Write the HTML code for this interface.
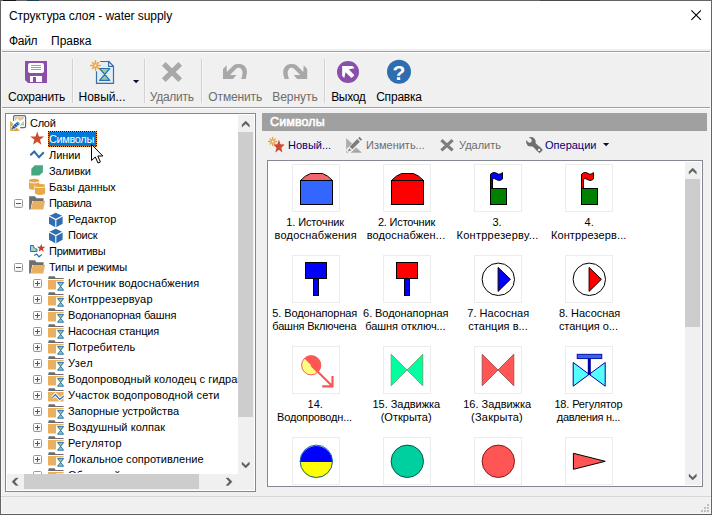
<!DOCTYPE html>
<html lang="ru"><head><meta charset="utf-8"><title>Структура слоя - water supply</title>
<style>
*{box-sizing:border-box}
html,body{margin:0;padding:0}
body{width:712px;height:515px;overflow:hidden;background:#f0f0f0;position:relative;font-family:"Liberation Sans",sans-serif;font-size:11px;color:#000}
.a{position:absolute}
.t{position:absolute;white-space:nowrap;line-height:16px}
.seg{font-size:12px}
.tb{position:absolute;font-size:12px;white-space:nowrap;top:89px;line-height:16px;text-align:center}
.dis{color:#6d6d6d}
.sep{position:absolute;top:59px;height:44px;width:2px;background:linear-gradient(90deg,#d2d2d2 50%,#f7f7f9 50%)}
.tr{position:absolute;white-space:nowrap;line-height:16px;height:16px;font-size:11px}
.exp{position:absolute;width:9px;height:9px;border:1px solid #989898;background:linear-gradient(#fff 50%,#ececec);border-radius:1.5px}
.exp i{position:absolute;left:1px;top:3px;width:5px;height:1px;background:#44558f}
.exp b{position:absolute;left:3px;top:1px;width:1px;height:5px;background:#44558f}
.ib{position:absolute;width:48px;height:48px;border:1px solid #ececec;background:#fff}
.lb{position:absolute;font-size:11px;line-height:16px;white-space:nowrap}
svg{position:absolute;overflow:visible}
</style></head>
<body>
<div class="a" style="left:0;top:0;width:712px;height:515px;border:1px solid #646464;border-bottom-color:#5c5c5c"></div>
<div class="a" style="left:1px;top:1px;width:710px;height:513px;border:1px solid #f8f8f8;border-top:0"></div>
<div class="a" style="left:3px;top:0;width:13px;height:1px;background:#151515"></div><div class="a" style="left:27px;top:0;width:12px;height:1px;background:#1c3f4e"></div><div class="a" style="left:540px;top:0;width:60px;height:1px;background:#4a4a4a"></div>
<div class="a" style="left:1px;top:1px;width:710px;height:48px;background:#fff"></div>
<div class="t seg" style="left:9px;top:8px;letter-spacing:-0.05px">Структура слоя - water supply</div>
<svg class="a" style="left:691px;top:10px" width="11" height="11" viewBox="0 0 11 11" ><path d="M0.4,0.4L9.9,9.9M9.9,0.4L0.4,9.9" stroke="#000" stroke-width="1.1" fill="none"/></svg>
<div class="t seg" style="left:9px;top:33px;letter-spacing:-0.3px">Файл</div>
<div class="t seg" style="left:51px;top:33px">Правка</div>
<div class="a" style="left:2px;top:51px;width:708px;height:1px;background:#a0a0a0"></div>
<div class="a" style="left:1px;top:52px;width:710px;height:1px;background:#fff"></div>
<div class="a" style="left:2px;top:107px;width:708px;height:1px;background:#a0a0a0"></div>
<div class="a" style="left:1px;top:108px;width:710px;height:1px;background:#fff"></div>
<div class="sep" style="left:72px"></div>
<div class="sep" style="left:144px"></div>
<div class="sep" style="left:201px"></div>
<div class="sep" style="left:324px"></div>
<div class="tb" style="left:-3.5px;width:80px;letter-spacing:-0.3px">Сохранить</div>
<div class="tb" style="left:62px;width:80px;letter-spacing:0px">Новый...</div>
<div class="tb dis" style="left:131.8px;width:80px;letter-spacing:-0.25px">Удалить</div>
<div class="tb dis" style="left:195.2px;width:80px;letter-spacing:-0.15px">Отменить</div>
<div class="tb dis" style="left:255px;width:80px;letter-spacing:0px">Вернуть</div>
<div class="tb" style="left:308.3px;width:80px;letter-spacing:-0.35px">Выход</div>
<div class="tb" style="left:359px;width:80px;letter-spacing:-0.2px">Справка</div>
<svg class="a" style="left:24px;top:60px" width="24" height="24" viewBox="0 0 24 24" ><path d="M1,1H23V23H4L1,20Z" fill="#8b4fab"/><rect x="4" y="3" width="16" height="10" rx="2" fill="#fff"/><rect x="7" y="5" width="10" height="1" fill="#a0a0a0"/><rect x="7" y="7" width="10" height="1" fill="#a0a0a0"/><rect x="7" y="9" width="10" height="1" fill="#a0a0a0"/><rect x="6" y="16" width="12" height="6" fill="#fff"/><rect x="9" y="17" width="3" height="5" fill="#8b4fab"/></svg>
<svg class="a" style="left:90px;top:59px" width="26" height="26" viewBox="0 0 26 26" ><path d="M7,2.5H18.6L23.5,7.4V24.4H6.5V2.5Z" fill="#e3edf8" stroke="#3a6ea5" stroke-width="1.2" stroke-linejoin="round"/><path d="M18.6,2.5V7.4H23.5Z" fill="#fff" stroke="#3a6ea5" stroke-width="1.2" stroke-linejoin="round"/><circle cx="5.5" cy="6.5" r="6" fill="#f0f0f0"/><path d="M9.6,9.5H19.8L9.6,21.4H19.8Z" fill="#8fd0a5" stroke="#2f6eb0" stroke-width="1.2" stroke-linejoin="round"/><line x1="0.70" y1="6.50" x2="10.30" y2="6.50" stroke="#e8a33d" stroke-width="1.5" stroke-linecap="round"/><line x1="2.51" y1="3.51" x2="8.49" y2="9.49" stroke="#e8a33d" stroke-width="1.5" stroke-linecap="round"/><line x1="5.50" y1="1.70" x2="5.50" y2="11.30" stroke="#e8a33d" stroke-width="1.5" stroke-linecap="round"/><line x1="8.49" y1="3.51" x2="2.51" y2="9.49" stroke="#e8a33d" stroke-width="1.5" stroke-linecap="round"/><circle cx="5.5" cy="6.5" r="1" fill="#fff"/></svg>
<svg class="a" style="left:132.9px;top:79.9px" width="7" height="4" viewBox="0 0 7 4" ><polygon points="0,0 6.2,0 3.1,3.2" fill="#0a1030"/></svg>
<svg class="a" style="left:160px;top:62px" width="24" height="20" viewBox="0 0 24 20" ><path d="M3.8,1.8L20.2,18.2M20.2,1.8L3.8,18.2" stroke="#a8a8a8" stroke-width="5.2" fill="none" transform="translate(0,0)"/></svg>
<svg class="a" style="left:223px;top:64px" width="25" height="16" viewBox="0 0 25 16" ><path d="M0,14.9V4.95L3.55,1.35L3.85,8.05L10.65,1.35C13,-0.4 18.5,-0.8 21.5,2 C24.5,5 24.6,9 22.65,14.9H18.15C19.8,10.5 20.2,7.5 18.4,5.2C16.8,3.4 14.3,3.6 13.15,4.75L6.95,10.95H13.45L10.05,14.9Z" fill="#a8a8a8"/></svg>
<svg class="a" style="left:283px;top:64px" width="25" height="16" viewBox="0 0 25 16" ><path d="M0,14.9V4.95L3.55,1.35L3.85,8.05L10.65,1.35C13,-0.4 18.5,-0.8 21.5,2 C24.5,5 24.6,9 22.65,14.9H18.15C19.8,10.5 20.2,7.5 18.4,5.2C16.8,3.4 14.3,3.6 13.15,4.75L6.95,10.95H13.45L10.05,14.9Z" fill="#a8a8a8" transform="translate(24.2,0) scale(-1,1)"/></svg>
<svg class="a" style="left:337px;top:60px" width="24" height="24" viewBox="0 0 24 24" ><circle cx="11" cy="12" r="11" fill="#8b4fab"/><polygon points="5.16,5.94 15.50,5.94 17.60,8.30 11.80,9.35 17.40,15.25 14.50,18.05 8.50,12.15 7.30,18.05 5.16,15.90" fill="#fff"/></svg>
<svg class="a" style="left:387px;top:60px" width="24" height="24" viewBox="0 0 24 24" ><circle cx="12" cy="11.8" r="12" fill="#2e6db0"/><text x="12" y="19.6" text-anchor="middle" font-family="Liberation Sans, sans-serif" font-weight="bold" font-size="21" fill="#fff">?</text></svg>
<div class="a" style="left:5px;top:113px;width:251px;height:379px;border:1px solid #828790;background:#fff"></div>
<div class="a" style="left:7px;top:115px;width:231px;height:359px;overflow:hidden">
<svg class="a" style="left:2px;top:0px" width="18" height="17" viewBox="0 0 18 17" ><rect x="4.6" y="0.6" width="12" height="12" rx="1.4" fill="#fff" stroke="#6a6a6a" stroke-width="1.2"/><polygon points="6,2.1 15,2.1 15,2.9 11.3,6 8.5,3.6 6,5.8" fill="#f0c88a"/><rect x="3.6" y="5.9" width="7.6" height="8" fill="#fff"/><polygon points="15,6.2 15,10.6 10.3,10.6" fill="#9ad6b4"/><polygon points="1.1,5.8 1.1,15.9 10.9,15.9" fill="#e8a840"/><path d="M3.4,13.4L10.4,7.2" stroke="#fff" stroke-width="4.6"/><path d="M4.6,12.3L9.8,7.8" stroke="#1458b0" stroke-width="3.2"/><path d="M2.9,13.9L6.1,13.2L3.7,10.7Z" fill="#1458b0"/><path d="M4.6,10.2L6.9,12.8M6.6,8.5L8.9,11.1M8.1,7.2L10.4,9.8" stroke="#fff" stroke-width="0.6"/><path d="M9.6,4.4L11.4,6.2" stroke="#7aa0d0" stroke-width="0.6" stroke-dasharray="0.7 0.7"/><path d="M13.2,4.6L15.6,2.4" stroke="#7aa0d0" stroke-width="0.6" stroke-dasharray="0.7 0.7"/><path d="M5.8,14.9h0.8M7.4,14.9h0.8" stroke="#b88430" stroke-width="0.8"/></svg>
<div class="tr" style="left:23px;top:0px;letter-spacing:-0.317px">Слой</div>
<svg class="a" style="left:23px;top:16px" width="16" height="16" viewBox="0 0 16 16" ><polygon points="7.20,0.50 8.90,5.45 14.14,5.54 9.96,8.70 11.49,13.71 7.20,10.70 2.91,13.71 4.44,8.70 0.26,5.54 5.50,5.45" fill="#d04a2f"/></svg>
<div class="a" style="left:41px;top:16px;width:49px;height:16px;background:repeating-conic-gradient(#ff8c28 0 25%,#111 0 50%) 0 0/2px 2px"></div><div class="a" style="left:42px;top:17px;width:47px;height:14px;background:#0078d7"></div>
<div class="tr" style="left:42px;top:16px;color:#fff;letter-spacing:-0.38px">Символы</div>
<svg class="a" style="left:23px;top:32px" width="16" height="16" viewBox="0 0 16 16" ><path d="M0.3,8.3L4.3,4.5L9,10.3L13.8,5.3" stroke="#2e6da8" stroke-width="2" fill="none"/></svg>
<div class="tr" style="left:42px;top:32px;letter-spacing:-0.084px">Линии</div>
<svg class="a" style="left:23px;top:48px" width="16" height="16" viewBox="0 0 16 16" ><polygon points="1.3,5.8 4.8,2.3 12.9,2.3 12.9,9.2 9.3,12.6 1.3,12.6" fill="#45a97f"/></svg>
<div class="tr" style="left:42px;top:48px;letter-spacing:-0.023px">Заливки</div>
<svg class="a" style="left:23px;top:64px" width="17" height="17" viewBox="0 0 17 17" ><path d="M-1.0,1.8V8.899999999999999A5.1,1.8 0 0 0 9.2,8.899999999999999V1.8Z" fill="#e8a845" stroke="#fff" stroke-width="1" paint-order="stroke"/><ellipse cx="4.1" cy="2.4" rx="5.1" ry="1.8" fill="#fff"/><ellipse cx="4.1" cy="1.6" rx="5.1" ry="1.8" fill="#e8a845"/><path d="M4.9,6.7V14.1A5.1,1.8 0 0 0 15.1,14.1V6.7Z" fill="#e8a845" stroke="#fff" stroke-width="1" paint-order="stroke"/><ellipse cx="10" cy="7.3" rx="5.1" ry="1.8" fill="#fff"/><ellipse cx="10" cy="6.5" rx="5.1" ry="1.8" fill="#e8a845"/></svg>
<div class="tr" style="left:42px;top:64px;letter-spacing:-0.051px">Базы данных</div>
<div class="exp" style="left:7px;top:84px"><i></i></div>
<svg class="a" style="left:22px;top:80px" width="17" height="16" viewBox="0 0 17 16" ><path d="M0.1,14.6V1.2H5.8L7.6,3.3H14.6V6H3.2L1.6,14.6Z" fill="#6e6e6e"/><polygon points="3.9,6.1 16.1,6.1 14.3,14.6 1.8,14.6" fill="#e8b060"/></svg>
<div class="tr" style="left:42px;top:80px;letter-spacing:-0.329px">Правила</div>
<svg class="a" style="left:41px;top:96.5px" width="16" height="16" viewBox="0 0 16 16" ><polygon points="7.8,0.8 14.6,4 14.6,11.8 7.8,15.6 1,11.8 1,4" fill="#2e6db0"/><path d="M1,4L7.8,7.6L14.6,4M7.8,7.6V15.6" stroke="#fff" stroke-width="1.1" fill="none"/></svg>
<div class="tr" style="left:61px;top:96px;letter-spacing:0.163px">Редактор</div>
<svg class="a" style="left:41px;top:112.5px" width="16" height="16" viewBox="0 0 16 16" ><polygon points="7.8,0.8 14.6,4 14.6,11.8 7.8,15.6 1,11.8 1,4" fill="#2e6db0"/><path d="M1,4L7.8,7.6L14.6,4M7.8,7.6V15.6" stroke="#fff" stroke-width="1.1" fill="none"/></svg>
<div class="tr" style="left:61px;top:112px;letter-spacing:-0.221px">Поиск</div>
<svg class="a" style="left:23px;top:129.3px" width="16" height="16" viewBox="0 0 16 16" ><path d="M0.5,1.5H3.5C3.8,4 5,5 7,5V7.5H0.5Z" fill="#a0d8b8" stroke="#2e6db0" stroke-width="1"/><polygon points="11.20,-0.20 12.26,2.74 15.38,2.84 12.91,4.76 13.79,7.76 11.20,6.00 8.61,7.76 9.49,4.76 7.02,2.84 10.14,2.74" fill="#d03a2a"/><path d="M4.2,11.6L6.6,10L9,12.8L12,10.4" stroke="#2e6db0" stroke-width="1.2" fill="none"/></svg>
<div class="tr" style="left:42px;top:128px;letter-spacing:-0.277px">Примитивы</div>
<div class="exp" style="left:7px;top:148px"><i></i></div>
<svg class="a" style="left:22px;top:144px" width="17" height="16" viewBox="0 0 17 16" ><path d="M0.1,14.6V1.2H5.8L7.6,3.3H14.6V6H3.2L1.6,14.6Z" fill="#6e6e6e"/><polygon points="3.9,6.1 16.1,6.1 14.3,14.6 1.8,14.6" fill="#e8b060"/></svg>
<div class="tr" style="left:42px;top:144px;letter-spacing:-0.124px">Типы и режимы</div>
<div class="exp" style="left:26px;top:164px"><i></i><b></b></div>
<svg class="a" style="left:41px;top:160px" width="17" height="16" viewBox="0 0 17 16" ><path d="M0,4L0.8,1.2H6.6L7.6,2.9H15.6V4H0Z" fill="#6e6e6e"/><path d="M0,5H15.6V14.6H1.2Q0,14.6 0,13.4Z" fill="#e8b060"/><rect x="8" y="6.4" width="8.4" height="9.6" fill="#fff"/><path d="M9.6,7.6H15.6L9.6,15.2H15.6Z" fill="#8fd0a5" stroke="#2f6eb0" stroke-width="1.0" stroke-linejoin="round"/></svg>
<div class="tr" style="left:61px;top:160px;letter-spacing:0.073px">Источник водоснабжения</div>
<div class="exp" style="left:26px;top:180px"><i></i><b></b></div>
<svg class="a" style="left:41px;top:176px" width="17" height="16" viewBox="0 0 17 16" ><path d="M0,4L0.8,1.2H6.6L7.6,2.9H15.6V4H0Z" fill="#6e6e6e"/><path d="M0,5H15.6V14.6H1.2Q0,14.6 0,13.4Z" fill="#e8b060"/><rect x="8" y="6.4" width="8.4" height="9.6" fill="#fff"/><path d="M9.6,7.6H15.6L9.6,15.2H15.6Z" fill="#8fd0a5" stroke="#2f6eb0" stroke-width="1.0" stroke-linejoin="round"/></svg>
<div class="tr" style="left:61px;top:176px;letter-spacing:0.183px">Контррезервуар</div>
<div class="exp" style="left:26px;top:196px"><i></i><b></b></div>
<svg class="a" style="left:41px;top:192px" width="17" height="16" viewBox="0 0 17 16" ><path d="M0,4L0.8,1.2H6.6L7.6,2.9H15.6V4H0Z" fill="#6e6e6e"/><path d="M0,5H15.6V14.6H1.2Q0,14.6 0,13.4Z" fill="#e8b060"/><rect x="8" y="6.4" width="8.4" height="9.6" fill="#fff"/><path d="M9.6,7.6H15.6L9.6,15.2H15.6Z" fill="#8fd0a5" stroke="#2f6eb0" stroke-width="1.0" stroke-linejoin="round"/></svg>
<div class="tr" style="left:61px;top:192px;letter-spacing:-0.11px">Водонапорная башня</div>
<div class="exp" style="left:26px;top:212px"><i></i><b></b></div>
<svg class="a" style="left:41px;top:208px" width="17" height="16" viewBox="0 0 17 16" ><path d="M0,4L0.8,1.2H6.6L7.6,2.9H15.6V4H0Z" fill="#6e6e6e"/><path d="M0,5H15.6V14.6H1.2Q0,14.6 0,13.4Z" fill="#e8b060"/><rect x="8" y="6.4" width="8.4" height="9.6" fill="#fff"/><path d="M9.6,7.6H15.6L9.6,15.2H15.6Z" fill="#8fd0a5" stroke="#2f6eb0" stroke-width="1.0" stroke-linejoin="round"/></svg>
<div class="tr" style="left:61px;top:208px;letter-spacing:-0.149px">Насосная станция</div>
<div class="exp" style="left:26px;top:228px"><i></i><b></b></div>
<svg class="a" style="left:41px;top:224px" width="17" height="16" viewBox="0 0 17 16" ><path d="M0,4L0.8,1.2H6.6L7.6,2.9H15.6V4H0Z" fill="#6e6e6e"/><path d="M0,5H15.6V14.6H1.2Q0,14.6 0,13.4Z" fill="#e8b060"/><rect x="8" y="6.4" width="8.4" height="9.6" fill="#fff"/><path d="M9.6,7.6H15.6L9.6,15.2H15.6Z" fill="#8fd0a5" stroke="#2f6eb0" stroke-width="1.0" stroke-linejoin="round"/></svg>
<div class="tr" style="left:61px;top:224px;letter-spacing:0.11px">Потребитель</div>
<div class="exp" style="left:26px;top:244px"><i></i><b></b></div>
<svg class="a" style="left:41px;top:240px" width="17" height="16" viewBox="0 0 17 16" ><path d="M0,4L0.8,1.2H6.6L7.6,2.9H15.6V4H0Z" fill="#6e6e6e"/><path d="M0,5H15.6V14.6H1.2Q0,14.6 0,13.4Z" fill="#e8b060"/><rect x="8" y="6.4" width="8.4" height="9.6" fill="#fff"/><path d="M9.6,7.6H15.6L9.6,15.2H15.6Z" fill="#8fd0a5" stroke="#2f6eb0" stroke-width="1.0" stroke-linejoin="round"/></svg>
<div class="tr" style="left:61px;top:240px;letter-spacing:0.377px">Узел</div>
<div class="exp" style="left:26px;top:260px"><i></i><b></b></div>
<svg class="a" style="left:41px;top:256px" width="17" height="16" viewBox="0 0 17 16" ><path d="M0,4L0.8,1.2H6.6L7.6,2.9H15.6V4H0Z" fill="#6e6e6e"/><path d="M0,5H15.6V14.6H1.2Q0,14.6 0,13.4Z" fill="#e8b060"/><rect x="8" y="6.4" width="8.4" height="9.6" fill="#fff"/><path d="M9.6,7.6H15.6L9.6,15.2H15.6Z" fill="#8fd0a5" stroke="#2f6eb0" stroke-width="1.0" stroke-linejoin="round"/></svg>
<div class="tr" style="left:61px;top:256px;letter-spacing:0.06px">Водопроводный колодец с гидрантом</div>
<div class="exp" style="left:26px;top:276px"><i></i><b></b></div>
<svg class="a" style="left:41px;top:272px" width="17" height="16" viewBox="0 0 17 16" ><path d="M0,4L0.8,1.2H6.6L7.6,2.9H15.6V4H0Z" fill="#6e6e6e"/><path d="M0,5H15.6V14.6H1.2Q0,14.6 0,13.4Z" fill="#e8b060"/><path d="M4.2,10.6L7.4,7.6L11.6,12.4L15.6,9.2" stroke="#fff" stroke-width="3.2" fill="none"/><path d="M4.2,10.6L7.4,7.6L11.6,12.4L15.6,9.2" stroke="#2e6db0" stroke-width="1.3" fill="none"/></svg>
<div class="tr" style="left:61px;top:272px;letter-spacing:0.164px">Участок водопроводной сети</div>
<div class="exp" style="left:26px;top:292px"><i></i><b></b></div>
<svg class="a" style="left:41px;top:288px" width="17" height="16" viewBox="0 0 17 16" ><path d="M0,4L0.8,1.2H6.6L7.6,2.9H15.6V4H0Z" fill="#6e6e6e"/><path d="M0,5H15.6V14.6H1.2Q0,14.6 0,13.4Z" fill="#e8b060"/><rect x="8" y="6.4" width="8.4" height="9.6" fill="#fff"/><path d="M9.6,7.6H15.6L9.6,15.2H15.6Z" fill="#8fd0a5" stroke="#2f6eb0" stroke-width="1.0" stroke-linejoin="round"/></svg>
<div class="tr" style="left:61px;top:288px;letter-spacing:0.012px">Запорные устройства</div>
<div class="exp" style="left:26px;top:308px"><i></i><b></b></div>
<svg class="a" style="left:41px;top:304px" width="17" height="16" viewBox="0 0 17 16" ><path d="M0,4L0.8,1.2H6.6L7.6,2.9H15.6V4H0Z" fill="#6e6e6e"/><path d="M0,5H15.6V14.6H1.2Q0,14.6 0,13.4Z" fill="#e8b060"/><rect x="8" y="6.4" width="8.4" height="9.6" fill="#fff"/><path d="M9.6,7.6H15.6L9.6,15.2H15.6Z" fill="#8fd0a5" stroke="#2f6eb0" stroke-width="1.0" stroke-linejoin="round"/></svg>
<div class="tr" style="left:61px;top:304px;letter-spacing:0.061px">Воздушный колпак</div>
<div class="exp" style="left:26px;top:324px"><i></i><b></b></div>
<svg class="a" style="left:41px;top:320px" width="17" height="16" viewBox="0 0 17 16" ><path d="M0,4L0.8,1.2H6.6L7.6,2.9H15.6V4H0Z" fill="#6e6e6e"/><path d="M0,5H15.6V14.6H1.2Q0,14.6 0,13.4Z" fill="#e8b060"/><rect x="8" y="6.4" width="8.4" height="9.6" fill="#fff"/><path d="M9.6,7.6H15.6L9.6,15.2H15.6Z" fill="#8fd0a5" stroke="#2f6eb0" stroke-width="1.0" stroke-linejoin="round"/></svg>
<div class="tr" style="left:61px;top:320px;letter-spacing:0.227px">Регулятор</div>
<div class="exp" style="left:26px;top:340px"><i></i><b></b></div>
<svg class="a" style="left:41px;top:336px" width="17" height="16" viewBox="0 0 17 16" ><path d="M0,4L0.8,1.2H6.6L7.6,2.9H15.6V4H0Z" fill="#6e6e6e"/><path d="M0,5H15.6V14.6H1.2Q0,14.6 0,13.4Z" fill="#e8b060"/><rect x="8" y="6.4" width="8.4" height="9.6" fill="#fff"/><path d="M9.6,7.6H15.6L9.6,15.2H15.6Z" fill="#8fd0a5" stroke="#2f6eb0" stroke-width="1.0" stroke-linejoin="round"/></svg>
<div class="tr" style="left:61px;top:336px;letter-spacing:0.006px">Локальное сопротивление</div>
<div class="exp" style="left:26px;top:356px"><i></i></div>
<svg class="a" style="left:41px;top:352px" width="17" height="16" viewBox="0 0 17 16" ><path d="M0,4L0.8,1.2H6.6L7.6,2.9H15.6V4H0Z" fill="#6e6e6e"/><path d="M0,5H15.6V14.6H1.2Q0,14.6 0,13.4Z" fill="#e8b060"/><rect x="8" y="6.4" width="8.4" height="9.6" fill="#fff"/><path d="M9.6,7.6H15.6L9.6,15.2H15.6Z" fill="#8fd0a5" stroke="#2f6eb0" stroke-width="1.0" stroke-linejoin="round"/></svg>
<div class="a" style="left:61px;top:352px;width:170px;height:6px;overflow:hidden"><div class="tr" style="left:0;top:0;letter-spacing:0.06px">Обратный клапан</div></div>
</div>
<div class="a" style="left:238px;top:115px;width:16px;height:359px;background:#f0f0f0"></div>
<div class="a" style="left:238px;top:132px;width:15px;height:285px;background:#cdcdcd"></div>
<svg class="a" style="left:241.8px;top:120.9px" width="8" height="8" viewBox="0 0 8 8" ><polygon points="3.70,0.00 7.40,3.70 7.40,6.10 3.70,2.70 0.00,6.10 0.00,3.70" fill="#5c5c5c" stroke="#5c5c5c" stroke-width="0.35"/></svg>
<svg class="a" style="left:241.8px;top:461.9px" width="8" height="8" viewBox="0 0 8 8" ><polygon points="3.70,6.10 7.40,2.40 7.40,0.00 3.70,3.40 0.00,0.00 0.00,2.40" fill="#5c5c5c" stroke="#5c5c5c" stroke-width="0.35"/></svg>
<div class="a" style="left:7px;top:474px;width:247px;height:16px;background:#f0f0f0"></div>
<div class="a" style="left:24px;top:474px;width:175px;height:15px;background:#cdcdcd"></div>
<svg class="a" style="left:11.9px;top:477.8px" width="8" height="8" viewBox="0 0 8 8" ><polygon points="0.00,3.70 3.70,7.40 6.10,7.40 2.70,3.70 6.10,0.00 3.70,0.00" fill="#5c5c5c" stroke="#5c5c5c" stroke-width="0.35"/></svg>
<svg class="a" style="left:226px;top:477.8px" width="8" height="8" viewBox="0 0 8 8" ><polygon points="6.10,3.70 2.40,7.40 0.00,7.40 3.40,3.70 0.00,0.00 2.40,0.00" fill="#5c5c5c" stroke="#5c5c5c" stroke-width="0.35"/></svg>
<svg class="a" style="left:91px;top:144px" width="13" height="21" viewBox="0 0 13 21" ><path d="M0.5,0.5V16.5L4.3,13L7,19L9.4,18L6.8,12H11.8Z" fill="#fff" stroke="#000" stroke-width="1" stroke-linejoin="miter"/></svg>
<div class="a" style="left:262px;top:113px;width:445px;height:18px;background:#a0a0a0"></div>
<div class="t" style="left:270px;top:114px;font-size:12.5px;color:#fff;-webkit-text-stroke:0.55px #fff;letter-spacing:0.1px">Символы</div>
<svg class="a" style="left:269px;top:137px" width="17" height="17" viewBox="0 0 17 17" ><line x1="-0.40" y1="4.50" x2="7.60" y2="4.50" stroke="#e8a33d" stroke-width="1.3" stroke-linecap="round"/><line x1="1.11" y1="2.01" x2="6.09" y2="6.99" stroke="#e8a33d" stroke-width="1.3" stroke-linecap="round"/><line x1="3.60" y1="0.50" x2="3.60" y2="8.50" stroke="#e8a33d" stroke-width="1.3" stroke-linecap="round"/><line x1="6.09" y1="2.01" x2="1.11" y2="6.99" stroke="#e8a33d" stroke-width="1.3" stroke-linecap="round"/><circle cx="3.6" cy="4.5" r="1" fill="#fff"/><polygon points="9.90,2.50 11.43,7.18 15.61,7.48 12.37,10.66 13.43,15.52 9.90,12.82 6.37,15.52 7.43,10.66 4.19,7.48 8.37,7.18" fill="#d04a2f" stroke="#f0f0f0" stroke-width="0.8" paint-order="stroke"/></svg>
<div class="t" style="left:288px;top:137px;color:#00007a">Новый...</div>
<svg class="a" style="left:345px;top:135px;overflow:hidden" width="19" height="19" viewBox="-1 -2 19 19"><polygon points="0.1,1.1 0.1,15.7 16,15.7" fill="#adadad"/><path d="M8.2,14.6h0.8M10.2,14.6h0.8M12.2,14.6h0.8" stroke="#8a8a8a" stroke-width="0.8"/><g transform="translate(0,0.7)"><path d="M3.6,12.2L14.4,1.4" stroke="#f4f4f4" stroke-width="5.4" stroke-linecap="square"/><path d="M1.2,14.6L6.4,13.2L2.6,9.4Z" fill="#f4f4f4"/><path d="M5,10.3L12.6,2.7" stroke="#7c7c7c" stroke-width="3.8"/><path d="M13.5,1.8L14.9,0.4" stroke="#7c7c7c" stroke-width="3.8"/><path d="M1.9,13.9L5.6,12.6L3.2,10.2Z" fill="#7c7c7c"/><path d="M3.4,10.6L5.2,12.4" stroke="#f0f0f0" stroke-width="0.7"/></g></svg>
<div class="t dis" style="left:366px;top:137px">Изменить...</div>
<svg class="a" style="left:440px;top:139px" width="14" height="13" viewBox="0 0 14 13" ><path d="M1.4,1.1L12.6,11.4M12.6,1.1L1.4,11.4" stroke="#7d7d7d" stroke-width="3.3" fill="none"/></svg>
<div class="t dis" style="left:459px;top:137px">Удалить</div>
<svg class="a" style="left:526px;top:137px;overflow:hidden" width="17" height="17" viewBox="0 0 17 17"><circle cx="4.9" cy="4.8" r="4.8" fill="#6f6f6f"/><path d="M5.5,5.4L13.2,12.6" stroke="#6f6f6f" stroke-width="4.6" stroke-linecap="round"/><path d="M13,12.4L13.6,13" stroke="#6f6f6f" stroke-width="4.6" stroke-linecap="square"/><circle cx="3.7" cy="3.7" r="2.1" fill="#f0f0f0"/><path d="M3.5,3.5L-1,-1" stroke="#f0f0f0" stroke-width="3.9"/><circle cx="13.1" cy="12.9" r="1.15" fill="#fff"/></svg>
<div class="t" style="left:545px;top:137px;color:#00007a">Операции</div>
<svg class="a" style="left:602.8px;top:143.0px" width="7" height="4" viewBox="0 0 7 4" ><polygon points="0,0 6.2,0 3.1,3.2" fill="#0a1030"/></svg>
<div class="a" style="left:267px;top:160px;width:436px;height:327px;border:1px solid #828790;background:#fff"></div>
<div class="a" style="left:269px;top:162px;width:416px;height:323px;overflow:hidden">
<div class="ib" style="left:23px;top:2px"></div>
<svg class="a" style="left:23px;top:2px" width="48" height="48" viewBox="0 0 48 48" ><path d="M8.5,16.5Q13,11.5 18.5,9.5H30.5Q36,11.5 40.5,16.5Z" fill="#f4646a" stroke="#000" stroke-width="1"/><rect x="8.5" y="16.5" width="32" height="24" fill="#3366ff" stroke="#000" stroke-width="1"/></svg>
<div class="lb" style="left:17.3px;top:52px;letter-spacing:-0.13px">1. Источник</div>
<div class="lb" style="left:5.6px;top:65px;letter-spacing:0.2px">водоснабжения</div>
<div class="ib" style="left:114px;top:2px"></div>
<svg class="a" style="left:114px;top:2px" width="48" height="48" viewBox="0 0 48 48" ><path d="M8.5,16.5Q13,11.5 18.5,9.5H30.5Q36,11.5 40.5,16.5Z" fill="#ff0000" stroke="#000" stroke-width="1"/><rect x="8.5" y="16.5" width="32" height="24" fill="#ff0000" stroke="#000" stroke-width="1"/></svg>
<div class="lb" style="left:108.9px;top:52px;letter-spacing:-0.18px">2. Источник</div>
<div class="lb" style="left:97.7px;top:65px;letter-spacing:0.138px">водоснабжен...</div>
<div class="ib" style="left:205px;top:2px"></div>
<svg class="a" style="left:205px;top:2px" width="48" height="48" viewBox="0 0 48 48" ><path d="M16.5,24.5V10.2Q18.5,8.3 20.3,8.5T24.7,10.3Q26.8,10.2 28.5,8.6V15Q26.5,16.8 24.7,16.4T20.3,14.5Q19,14.6 18.5,15.6V24.5Z" fill="#0000ff" stroke="#000" stroke-width="1" stroke-linejoin="round"/><rect x="16.5" y="24.5" width="16" height="16" fill="#008000" stroke="#000" stroke-width="1"/></svg>
<div class="lb" style="left:223.4px;top:52px;letter-spacing:0px">3.</div>
<div class="lb" style="left:187.5px;top:65px;letter-spacing:0.271px">Контррезерву...</div>
<div class="ib" style="left:296px;top:2px"></div>
<svg class="a" style="left:296px;top:2px" width="48" height="48" viewBox="0 0 48 48" ><path d="M16.5,24.5V10.2Q18.5,8.3 20.3,8.5T24.7,10.3Q26.8,10.2 28.5,8.6V15Q26.5,16.8 24.7,16.4T20.3,14.5Q19,14.6 18.5,15.6V24.5Z" fill="#ff0000" stroke="#000" stroke-width="1" stroke-linejoin="round"/><rect x="16.5" y="24.5" width="16" height="16" fill="#008000" stroke="#000" stroke-width="1"/></svg>
<div class="lb" style="left:315.6px;top:52px;letter-spacing:0px">4.</div>
<div class="lb" style="left:281.9px;top:65px;letter-spacing:0.123px">Контррезерв...</div>
<div class="ib" style="left:23px;top:93px"></div>
<svg class="a" style="left:23px;top:93px" width="48" height="48" viewBox="0 0 48 48" ><rect x="21.5" y="23.5" width="5" height="17" fill="#0000ff" stroke="#000" stroke-width="1"/><rect x="13.5" y="7.5" width="21" height="16" fill="#0000ff" stroke="#000" stroke-width="1"/></svg>
<div class="lb" style="left:3.3px;top:143px;letter-spacing:-0.107px">5. Водонапорная</div>
<div class="lb" style="left:3.3px;top:156px;letter-spacing:-0.192px">башня Включена</div>
<div class="ib" style="left:114px;top:93px"></div>
<svg class="a" style="left:114px;top:93px" width="48" height="48" viewBox="0 0 48 48" ><rect x="21.5" y="23.5" width="5" height="17" fill="#0000ff" stroke="#000" stroke-width="1"/><rect x="13.5" y="7.5" width="21" height="16" fill="#ff0000" stroke="#000" stroke-width="1"/></svg>
<div class="lb" style="left:94.1px;top:143px;letter-spacing:-0.079px">6. Водонапорная</div>
<div class="lb" style="left:96.2px;top:156px;letter-spacing:-0.057px">башня отключ...</div>
<div class="ib" style="left:205px;top:93px"></div>
<svg class="a" style="left:205px;top:93px" width="48" height="48" viewBox="0 0 48 48" ><circle cx="24.3" cy="24.3" r="16.2" fill="#fff" stroke="#000" stroke-width="1"/><polygon points="24.1,12.4 36.4,24.3 24.1,36.4" fill="#0000ff" stroke="#000" stroke-width="1"/></svg>
<div class="lb" style="left:198.3px;top:143px;letter-spacing:0.02px">7. Насосная</div>
<div class="lb" style="left:199.3px;top:156px;letter-spacing:0.036px">станция в...</div>
<div class="ib" style="left:296px;top:93px"></div>
<svg class="a" style="left:296px;top:93px" width="48" height="48" viewBox="0 0 48 48" ><circle cx="24.3" cy="24.3" r="16.2" fill="#fff" stroke="#000" stroke-width="1"/><polygon points="24.1,12.4 36.4,24.3 24.1,36.4" fill="#ff0000" stroke="#000" stroke-width="1"/></svg>
<div class="lb" style="left:289.9px;top:143px;letter-spacing:-0.03px">8. Насосная</div>
<div class="lb" style="left:289.9px;top:156px;letter-spacing:-0.027px">станция о...</div>
<div class="ib" style="left:23px;top:184px"></div>
<svg class="a" style="left:23px;top:184px" width="48" height="48" viewBox="0 0 48 48" ><circle cx="19.2" cy="19.2" r="9.6" fill="#ffff7f"/><path d="M12.411774900609144,12.411774900609144A9.6,9.6 0 0 1 25.988225099390853,25.988225099390853Z" fill="#ff5555"/><circle cx="19.2" cy="19.2" r="9.6" fill="none" stroke="#ff5555" stroke-width="1"/><path d="M19.2,19.2L40.2,40M40.5,30V40.3H30.2" stroke="#ff5555" stroke-width="2.2" fill="none"/></svg>
<div class="lb" style="left:38.6px;top:234px;letter-spacing:0px">14.</div>
<div class="lb" style="left:8.0px;top:247px;letter-spacing:-0.162px">Водопроводн...</div>
<div class="ib" style="left:114px;top:184px"></div>
<svg class="a" style="left:114px;top:184px" width="48" height="48" viewBox="0 0 48 48" ><path d="M8.2,8.2L39.8,39.8V8.2L8.2,39.8Z" fill="#00ffa0" stroke="#5fa060" stroke-width="0.8" stroke-linejoin="round"/></svg>
<div class="lb" style="left:103.5px;top:234px;letter-spacing:-0.036px">15. Задвижка</div>
<div class="lb" style="left:111.7px;top:247px;letter-spacing:0.013px">(Открыта)</div>
<div class="ib" style="left:205px;top:184px"></div>
<svg class="a" style="left:205px;top:184px" width="48" height="48" viewBox="0 0 48 48" ><path d="M8.2,8.2L39.8,39.8V8.2L8.2,39.8Z" fill="#ff5555" stroke="#a04040" stroke-width="0.8" stroke-linejoin="round"/></svg>
<div class="lb" style="left:194.2px;top:234px;letter-spacing:-0.009px">16. Задвижка</div>
<div class="lb" style="left:202.1px;top:247px;letter-spacing:0.213px">(Закрыта)</div>
<div class="ib" style="left:296px;top:184px"></div>
<svg class="a" style="left:296px;top:184px" width="48" height="48" viewBox="0 0 48 48" ><path d="M8.2,16.5L40.2,40.2V16.5L8.2,40.2Z" fill="#55ffff" stroke="#0000a0" stroke-width="1" stroke-linejoin="round"/><rect x="22.8" y="12.5" width="3" height="16.5" fill="#0000a0"/><rect x="12.2" y="8.3" width="24.6" height="4.3" fill="#3366ee" stroke="#0000a0" stroke-width="0.9"/></svg>
<div class="lb" style="left:285.4px;top:234px;letter-spacing:-0.15px">18. Регулятор</div>
<div class="lb" style="left:287.8px;top:247px;letter-spacing:-0.308px">давления н...</div>
<div class="ib" style="left:23px;top:275px"></div>
<svg class="a" style="left:23px;top:275px" width="48" height="48" viewBox="0 0 48 48" ><path d="M8.100000000000001,25.1A16.2,16.2 0 0 1 40.5,25.1Z" fill="#0000ff"/><path d="M8.100000000000001,25.1A16.2,16.2 0 0 0 40.5,25.1Z" fill="#ffff00"/><circle cx="24.3" cy="24.3" r="16.2" fill="none" stroke="#1060a0" stroke-width="1"/></svg>
<div class="ib" style="left:114px;top:275px"></div>
<svg class="a" style="left:114px;top:275px" width="48" height="48" viewBox="0 0 48 48" ><circle cx="24.3" cy="24.3" r="16.2" fill="#00d0a0" stroke="#005a46" stroke-width="1"/></svg>
<div class="ib" style="left:205px;top:275px"></div>
<svg class="a" style="left:205px;top:275px" width="48" height="48" viewBox="0 0 48 48" ><circle cx="24.3" cy="24.3" r="16.2" fill="#ff5555" stroke="#8a1515" stroke-width="1"/></svg>
<div class="ib" style="left:296px;top:275px"></div>
<svg class="a" style="left:296px;top:275px" width="48" height="48" viewBox="0 0 48 48" ><polygon points="8.4,16.3 40.2,24.3 8.4,32.3" fill="#ff5555" stroke="#000" stroke-width="1"/></svg>
</div>
<div class="a" style="left:685px;top:162px;width:16px;height:323px;background:#f0f0f0"></div>
<div class="a" style="left:685px;top:179px;width:15px;height:148px;background:#cdcdcd"></div>
<svg class="a" style="left:688.8px;top:168px" width="8" height="8" viewBox="0 0 8 8" ><polygon points="3.70,0.00 7.40,3.70 7.40,6.10 3.70,2.70 0.00,6.10 0.00,3.70" fill="#5c5c5c" stroke="#5c5c5c" stroke-width="0.35"/></svg>
<svg class="a" style="left:688.8px;top:474px" width="8" height="8" viewBox="0 0 8 8" ><polygon points="3.70,6.10 7.40,2.40 7.40,0.00 3.70,3.40 0.00,0.00 0.00,2.40" fill="#5c5c5c" stroke="#5c5c5c" stroke-width="0.35"/></svg>
<div class="a" style="left:1px;top:496px;width:710px;height:1px;background:#d7d7d7"></div>
<svg class="a" style="left:701px;top:504px" width="9" height="9" viewBox="0 0 9 9" ><rect x="6" y="0" width="2" height="2" fill="#bfbfbf"/><rect x="3" y="3" width="2" height="2" fill="#bfbfbf"/><rect x="6" y="3" width="2" height="2" fill="#bfbfbf"/><rect x="0" y="6" width="2" height="2" fill="#bfbfbf"/><rect x="3" y="6" width="2" height="2" fill="#bfbfbf"/><rect x="6" y="6" width="2" height="2" fill="#bfbfbf"/></svg>
</body></html>
